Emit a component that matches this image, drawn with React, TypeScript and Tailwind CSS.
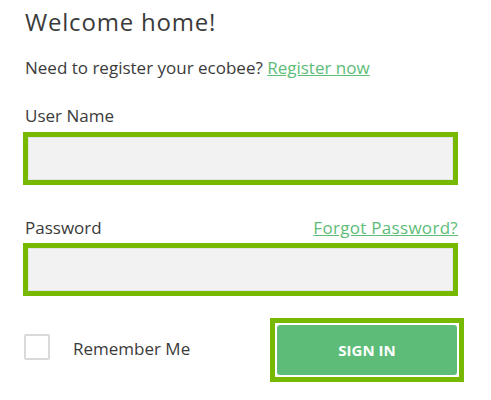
export default function App() {
  return (
    <div className="h-[400px] w-[491px] bg-white pl-[23px] pt-[6px] font-['Open_Sans',sans-serif] text-[#3b3b3b]">
      <div className="w-[435px]">
        <h1 className="pl-[2px] text-[24px] leading-[32px] tracking-[0.8px]">Welcome home!</h1>

        <p className="mt-[18px] pl-[2px] text-[17px] leading-[24px]">
          Need to register your ecobee?{' '}
          <a href="#" className="text-[#5dbd78] underline">
            Register now
          </a>
        </p>

        <label className="mt-[24px] block pl-[2px] text-[17px] leading-[24px]">User Name</label>
        <div className="mt-[4px] h-[53px] border-[5px] border-[#76b900]">
          <input type="text" className="h-full w-full border border-[#e4e4e4] bg-[#f2f2f2] outline-none" />
        </div>

        <div className="mt-[31px] flex items-baseline justify-between pl-[2px] text-[17px] leading-[24px]">
          <label>Password</label>
          <a href="#" className="tracking-[0.3px] text-[#5dbd78] underline">
            Forgot Password?
          </a>
        </div>
        <div className="mt-[3px] h-[53px] border-[5px] border-[#76b900]">
          <input type="password" className="h-full w-full border border-[#e4e4e4] bg-[#f2f2f2] outline-none" />
        </div>

        <div className="mt-[22px] flex items-start">
          <span className="mt-[16px] ml-px h-[26px] w-[26px] rounded-[2px] border-2 border-[#d9d9d9]" />
          <span className="ml-[23px] mt-[19px] text-[17px] leading-[24px]">Remember Me</span>
          <div className="-mr-[6px] ml-auto border-[5px] border-[#76b900] bg-white p-[2px]">
            <button className="flex h-[50px] w-[180px] items-center justify-center rounded-[3px] bg-[#5dbd78] text-[15px] font-bold text-white">
              SIGN IN
            </button>
          </div>
        </div>
      </div>
    </div>
  )
}
